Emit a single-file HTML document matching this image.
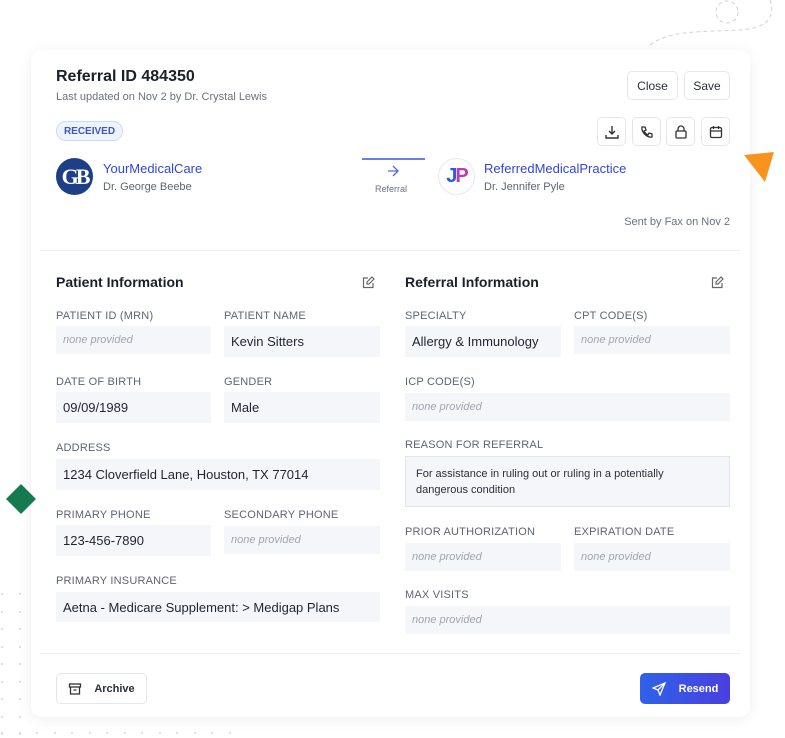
<!DOCTYPE html>
<html><head><style>
*{box-sizing:border-box;margin:0;padding:0}
body{width:785px;height:738px;background:#fff;font-family:"Liberation Sans",sans-serif;position:relative;overflow:hidden;color:#1f2430}
.a{position:absolute}
.card{position:absolute;left:31px;top:50px;width:719px;height:667px;background:#fff;border-radius:10px;box-shadow:0 2px 14px rgba(0,0,0,.07)}
.lbl{position:absolute;font-size:11px;color:#5d6573;letter-spacing:.2px}
.f{position:absolute;background:#f4f6f9;font-size:13px;color:#1f2430;padding-left:7px;display:flex;align-items:center}
.n{font-style:italic;color:#a0a6b0;font-size:11px}
.btn{position:absolute;border:1px solid #e3e6ec;border-radius:5px;background:#fff;display:flex;align-items:center;justify-content:center;font-size:12px;color:#2a2f3a}
.ib{width:29px;height:29px;top:117px}
.dot{position:absolute;width:2px;height:2px;border-radius:1px;background:#d3d6db}
</style></head><body>
<svg class="a" style="left:640px;top:0" width="145" height="50"><g fill="none" stroke="#cfd2d8" stroke-dasharray="4 3"><circle cx="87" cy="12" r="11"/><path d="M10 45 C30 30,60 32,100 30 C130 28,135 15,130 0"/></g></svg>
<div id="dots"></div>
<div class="card"></div>
<div class="a" style="left:56px;top:68px;font-size:16px;font-weight:bold;color:#1b1f29">Referral ID 484350</div>
<div class="a" style="left:56px;top:91px;font-size:11px;color:#6a7180">Last updated on Nov 2 by Dr. Crystal Lewis</div>
<div class="a" style="left:56px;top:121px;width:67px;height:20px;border:1px solid #c8dafb;background:#eef4ff;border-radius:10px;font-size:10px;color:#3f56b8;display:flex;align-items:center;justify-content:center;font-weight:bold">RECEIVED</div>
<div class="btn" style="left:627px;top:71px;width:51px;height:29px">Close</div>
<div class="btn" style="left:684px;top:71px;width:46px;height:29px">Save</div>
<div class="btn ib" style="left:597px"><svg width="14" height="14" fill="none" stroke="#333" stroke-width="1.4"><path d="M7 1v8M4 6l3 3 3-3M1 10v3h12v-3"/></svg></div>
<div class="btn ib" style="left:632px"><svg width="14" height="14" fill="none" stroke="#333" stroke-width="1.3"><path d="M2 2h3l1 3-2 1c1 2 2 3 4 4l1-2 3 1v3C7 13 1 7 2 2z"/></svg></div>
<div class="btn ib" style="left:666px"><svg width="14" height="14" fill="none" stroke="#333" stroke-width="1.3"><rect x="2" y="6" width="10" height="7" rx="1"/><path d="M4 6V4a3 3 0 016 0v2"/></svg></div>
<div class="btn ib" style="left:701px"><svg width="14" height="14" fill="none" stroke="#333" stroke-width="1.3"><rect x="1.5" y="2.5" width="11" height="10" rx="1.5"/><path d="M1.5 6h11M4.5 1v3M9.5 1v3"/></svg></div>
<div class="a" style="left:56px;top:158px;width:37px;height:37px;border-radius:50%;background:#1c3f86;color:#fff;font-family:'Liberation Serif',serif;font-weight:bold;font-size:22px;display:flex;align-items:center;justify-content:center;letter-spacing:-3px">GB</div>
<div class="a" style="left:103px;top:161px;font-size:13px;color:#3346d6">YourMedicalCare</div>
<div class="a" style="left:103px;top:181px;font-size:11px;color:#5d6573">Dr. George Beebe</div>
<div class="a" style="left:362px;top:158px;width:63px;height:2px;background:#6b7cf0"></div>
<svg class="a" style="left:387px;top:165px" width="12" height="12" fill="none" stroke="#5a63e0" stroke-width="1.3"><path d="M1 6h10M6 1l5 5-5 5"/></svg>
<div class="a" style="left:375px;top:184px;font-size:9px;color:#6a7180">Referral</div>
<div class="a" style="left:438px;top:158px;width:37px;height:37px;border-radius:50%;background:#fff;border:1px solid #e6e8ed;font-weight:bold;font-size:20px;display:flex;align-items:center;justify-content:center;color:#2c5be0;letter-spacing:-2px">J<span style="color:#c23ab0">P</span></div>
<div class="a" style="left:484px;top:161px;font-size:13px;color:#3346d6">ReferredMedicalPractice</div>
<div class="a" style="left:484px;top:181px;font-size:11px;color:#5d6573">Dr. Jennifer Pyle</div>
<div class="a" style="right:55px;top:216px;font-size:11px;color:#6a7180">Sent by Fax on Nov 2</div>
<svg class="a" style="left:744px;top:152px" width="32" height="32"><path d="M0 3L30 0 21 30z" fill="#f7931e"/></svg>
<svg class="a" style="left:6px;top:484px" width="30" height="30"><path d="M15 0L30 15 15 30 0 15z" fill="#157a4f"/></svg>
<div class="a" style="left:40px;top:250px;width:700px;height:1px;background:#eceef2"></div>
<div class="a" style="left:40px;top:653px;width:700px;height:1px;background:#eceef2"></div>
<div class="a" style="left:56px;top:274px;font-size:14px;font-weight:bold;color:#1b1f29">Patient Information</div>
<div class="a" style="left:405px;top:274px;font-size:14px;font-weight:bold;color:#1b1f29">Referral Information</div>
<svg class="a" style="left:362px;top:276px" width="13" height="13" fill="none" stroke="#666" stroke-width="1.2"><path d="M6 2H1.5v9.5H11V7M10 1l2 2-5 5H5V6z"/></svg>
<svg class="a" style="left:711px;top:276px" width="13" height="13" fill="none" stroke="#666" stroke-width="1.2"><path d="M6 2H1.5v9.5H11V7M10 1l2 2-5 5H5V6z"/></svg>

<div class="lbl" style="left:56px;top:310px">PATIENT ID (MRN)</div>
<div class="f n" style="left:56px;top:326px;width:155px;height:28px">none provided</div>
<div class="lbl" style="left:224px;top:310px">PATIENT NAME</div>
<div class="f" style="left:224px;top:326px;width:156px;height:31px">Kevin Sitters</div>
<div class="lbl" style="left:56px;top:376px">DATE OF BIRTH</div>
<div class="f" style="left:56px;top:392px;width:155px;height:31px">09/09/1989</div>
<div class="lbl" style="left:224px;top:376px">GENDER</div>
<div class="f" style="left:224px;top:392px;width:156px;height:31px">Male</div>
<div class="lbl" style="left:56px;top:442px">ADDRESS</div>
<div class="f" style="left:56px;top:459px;width:324px;height:31px">1234 Cloverfield Lane, Houston, TX 77014</div>
<div class="lbl" style="left:56px;top:509px">PRIMARY PHONE</div>
<div class="f" style="left:56px;top:525px;width:155px;height:31px">123-456-7890</div>
<div class="lbl" style="left:224px;top:509px">SECONDARY PHONE</div>
<div class="f n" style="left:224px;top:526px;width:156px;height:28px">none provided</div>
<div class="lbl" style="left:56px;top:575px">PRIMARY INSURANCE</div>
<div class="f" style="left:56px;top:592px;width:324px;height:30px">Aetna - Medicare Supplement: &gt; Medigap Plans</div>

<div class="lbl" style="left:405px;top:310px">SPECIALTY</div>
<div class="f" style="left:405px;top:326px;width:156px;height:31px">Allergy &amp; Immunology</div>
<div class="lbl" style="left:574px;top:310px">CPT CODE(S)</div>
<div class="f n" style="left:574px;top:326px;width:156px;height:28px">none provided</div>
<div class="lbl" style="left:405px;top:376px">ICP CODE(S)</div>
<div class="f n" style="left:405px;top:393px;width:325px;height:28px">none provided</div>
<div class="lbl" style="left:405px;top:439px">REASON FOR REFERRAL</div>
<div class="a" style="left:405px;top:456px;width:325px;height:51px;background:#f4f6f9;border:1px solid #e1e5eb;font-size:11px;line-height:16px;padding:9px 50px 9px 10px;color:#2a2f3a">For assistance in ruling out or ruling in a potentially dangerous condition</div>
<div class="lbl" style="left:405px;top:526px">PRIOR AUTHORIZATION</div>
<div class="f n" style="left:405px;top:543px;width:156px;height:28px">none provided</div>
<div class="lbl" style="left:574px;top:526px">EXPIRATION DATE</div>
<div class="f n" style="left:574px;top:543px;width:156px;height:28px">none provided</div>
<div class="lbl" style="left:405px;top:589px">MAX VISITS</div>
<div class="f n" style="left:405px;top:606px;width:325px;height:28px">none provided</div>

<div class="btn" style="left:56px;top:673px;width:91px;height:31px;font-size:11px;font-weight:bold"><svg width="14" height="14" fill="none" stroke="#333" stroke-width="1.3" style="margin-right:12px"><rect x="1.5" y="2" width="11" height="3"/><path d="M2.5 5v7h9V5M5.5 8h3"/></svg>Archive</div>
<div class="a" style="left:640px;top:673px;width:90px;height:31px;border-radius:5px;background:linear-gradient(90deg,#2f62e8,#4a3fe0);color:#fff;font-size:11px;font-weight:bold;display:flex;align-items:center;justify-content:center"><svg width="14" height="14" fill="none" stroke="#fff" stroke-width="1.3" style="margin-right:13px"><path d="M13 1L1 6l5 2 2 5z M13 1L6 8"/></svg>Resend</div>
<script>
var d=document.getElementById('dots'),h='';
for(var y=593;y<738;y+=17.5){for(var x=1;x<35;x+=17.5)h+='<div class="dot" style="left:'+x+'px;top:'+y+'px"></div>';}
for(var x=1;x<235;x+=17.5)h+='<div class="dot" style="left:'+x+'px;top:732px"></div>';
d.innerHTML=h;
</script>
</body></html>
